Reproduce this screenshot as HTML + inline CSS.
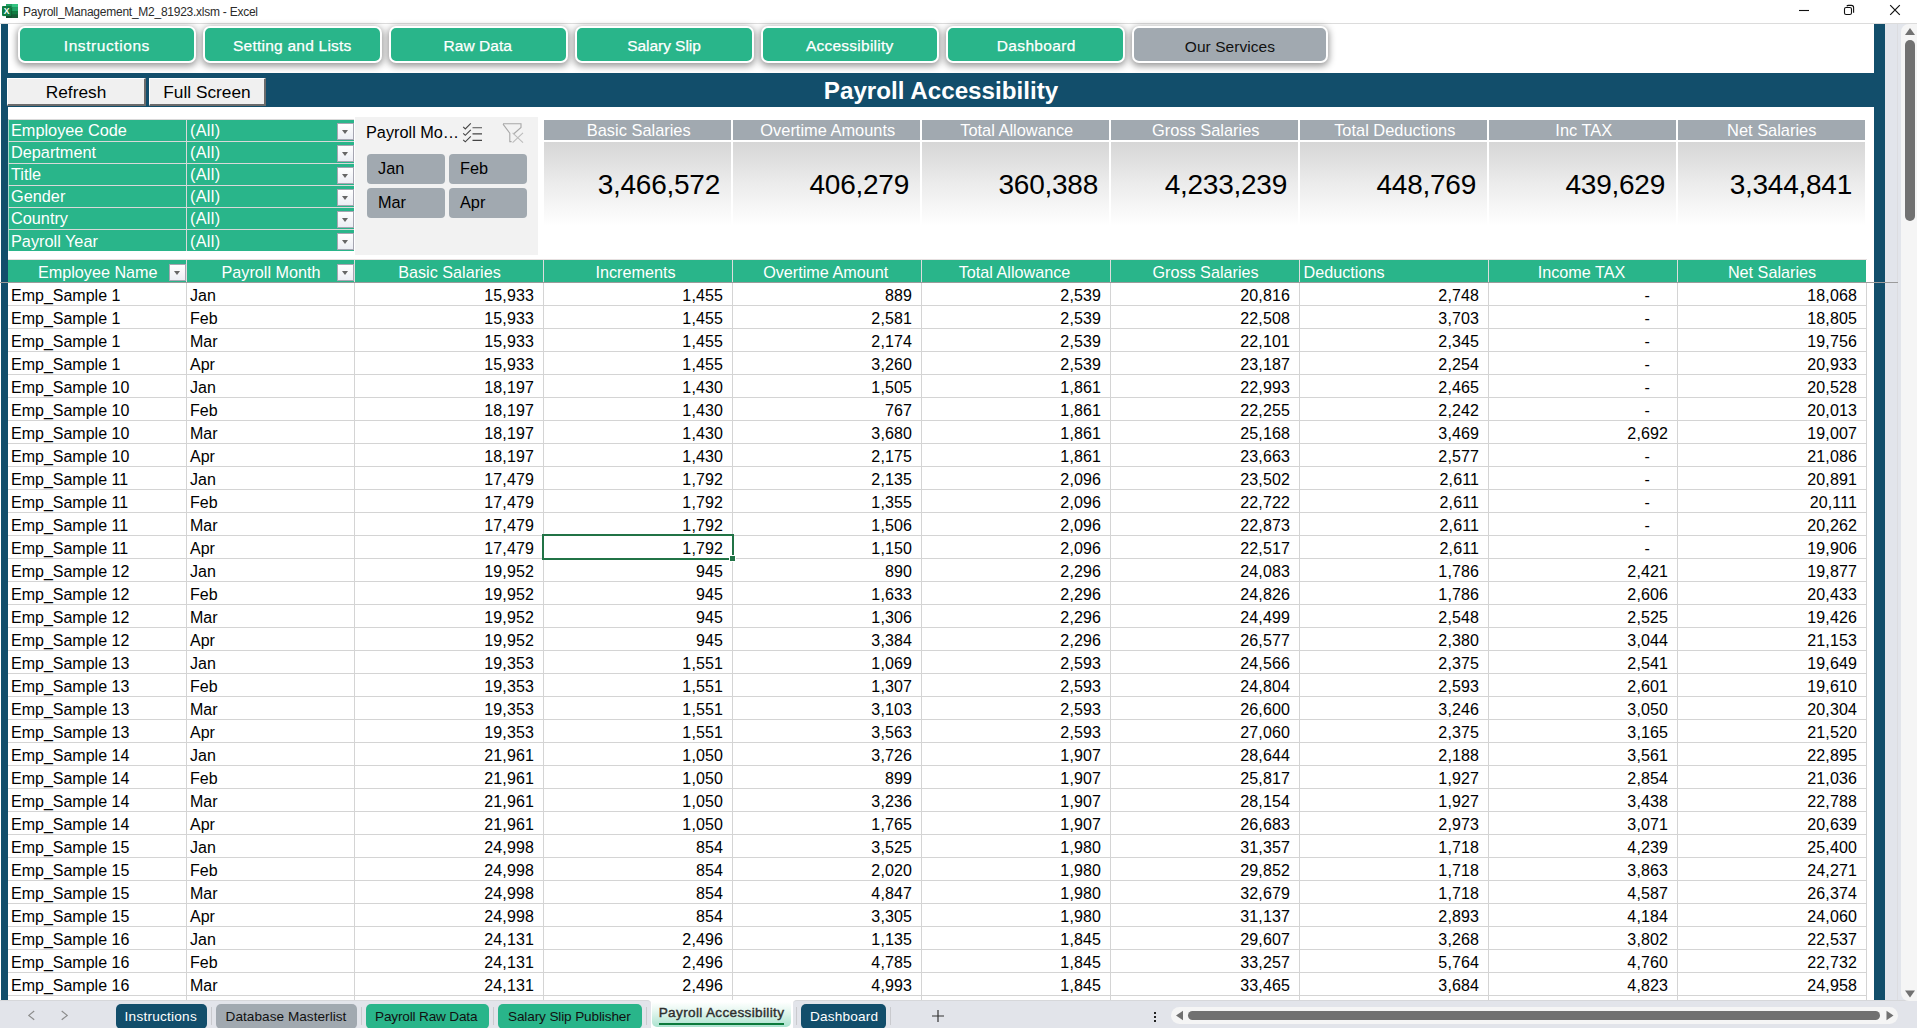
<!DOCTYPE html><html><head><meta charset="utf-8"><title>Payroll_Management_M2_81923.xlsm - Excel</title><style>
*{box-sizing:border-box;margin:0;padding:0}
html,body{width:1917px;height:1028px;overflow:hidden;background:#fff}
body{position:relative;font-family:"Liberation Sans",sans-serif;color:#000}
.abs{position:absolute}
#titlebar{left:0;top:0;width:1917px;height:23px;background:#fff}
#tbline{left:0;top:23px;width:1917px;height:1px;background:#dcdcdc}
#ttext{left:23px;top:4px;font-size:12px;line-height:16px;color:#2b2b2b;white-space:nowrap;letter-spacing:-0.25px}
#lstrip{left:1px;top:24px;width:7px;height:976px;background:#124e6b}
#rstrip{left:1874px;top:24px;width:11px;height:976px;background:#124e6b}
#rlight{left:1885px;top:24px;width:32px;height:976px;background:#e2e5eb;border-left:0}
#rline{left:1897px;top:24px;width:1px;height:976px;background:#dcdde0}
#vscroll{left:1901px;top:24px;width:20px;height:977px;background:#f5f5f5;border-radius:8px 0 0 8px;z-index:5}
#vthumb{left:1905px;top:40px;width:10px;height:181px;background:#717171;border-radius:5px;z-index:6}
#band{left:7px;top:73px;width:1878px;height:34px;background:#124e6b}
#title{left:741px;top:74px;width:400px;height:34px;line-height:34px;text-align:center;color:#fff;font-weight:bold;font-size:24.2px;white-space:nowrap}
.nav{top:26px;height:37px;border:2px solid #fff;border-radius:7px;background:#29b58a;color:#fff;font-size:15.5px;line-height:35px;text-align:left;-webkit-text-stroke:.25px #fff;box-shadow:0 2px 7px 1px rgba(0,0,0,.42);white-space:nowrap}
.nav.g{background:#a1a9b0;color:#111;line-height:37px;-webkit-text-stroke:0}
.fbtn{top:78px;height:28px;background:#f0f0f0;border-top:1px solid #fff;border-left:1px solid #fff;border-right:2px solid #6b6b6b;border-bottom:2px solid #6b6b6b;font-size:17.3px;line-height:27px;text-align:center;white-space:nowrap}
.frow{left:8px;width:346px;height:22px;background:#29b58a;border-top:1px solid #d9d9d9;border-left:1px solid #a5dac8;color:#fff;font-size:16.3px;line-height:21px;white-space:nowrap}
.frow .a{position:absolute;left:2px;top:0}
.frow .b{position:absolute;left:181px;top:0;letter-spacing:.28px}
.frow .sep{position:absolute;left:177px;top:0;width:1px;height:22px;background:#d9d9d9}
.dd{position:absolute;width:17px;height:17px;background:linear-gradient(#fff,#eceef4);border:1px solid #a6a6b2}
.dd:after{content:"";position:absolute;left:4px;top:6px;border:3.5px solid transparent;border-top:4px solid #666;border-bottom:0}
#slicer{left:355px;top:117px;width:183px;height:138px;background:#f2f2f2}
.sb{width:78px;height:30px;background:#a1a9b0;border-radius:4px;font-size:16.3px;line-height:29px;padding-left:11px;color:#000}
.kh{top:120px;height:20px;background:#a1a9b0;color:#fff;font-size:16.4px;line-height:21px;padding-left:2.5px;text-align:center;white-space:nowrap}
.kb{top:142px;height:84px;background:linear-gradient(#d6d6d6,#ececec 50%,#fff 100%);font-size:28px;letter-spacing:-.25px;line-height:86px;text-align:right;padding-right:11px;white-space:nowrap}
.th{top:260px;height:22px;background:#29b58a;color:#fff;font-size:16.2px;line-height:24px;text-align:center;white-space:nowrap}
.row{left:8px;width:1859px;height:23px;border-bottom:1px solid #d4d4d4;font-size:16px;line-height:25px;white-space:nowrap}
.c{position:absolute;top:0;height:23px;border-right:1px solid #d4d4d4;text-align:right;padding-right:9px;letter-spacing:.12px}
.c.l{text-align:left;padding-left:3px;padding-right:0;letter-spacing:0}
#freeze{left:0;top:282px;width:1898px;height:1px;background:#9b9b9b}
#sel{left:542px;top:534px;width:192px;height:26px;border:2px solid #217346}
#selh{left:729px;top:555px;width:5px;height:5px;background:#217346;border:1px solid #fff;box-sizing:content-box}
#tabbar{left:0;top:1000px;width:1917px;height:28px;background:#fff}
.tbseg{top:1000px;height:28px;background:#e2e4ea;border-top:1px solid #d6d7da}
.tab{top:1004px;height:25px;border-radius:5px;font-size:13.6px;line-height:26px;text-align:center;white-space:nowrap}
</style></head><body>
<div class="abs" id="titlebar"></div><div class="abs" id="tbline"></div>
<svg class="abs" style="left:0;top:0" width="20" height="20" viewBox="0 0 20 20"><rect x="6" y="4" width="12" height="14" rx="0.8" fill="#185c37"/><rect x="6" y="4" width="6" height="4" fill="#21a366"/><rect x="12" y="4" width="6" height="3.6" fill="#33c481"/><rect x="12" y="7.6" width="6" height="3.5" fill="#21a366"/><rect x="6" y="8" width="6" height="3.3" fill="#107c41"/><rect x="12" y="11.1" width="6" height="3.5" fill="#107c41"/><rect x="6" y="11.3" width="6" height="6.7" fill="#155231"/><rect x="12" y="14.600" width="6" height="3.400" fill="#185c37"/><rect x="2.6" y="6.400" width="9.800" height="9.800" rx="0.8" fill="#0b5a2e" opacity=".35"/><rect x="2" y="6" width="9.300" height="9.900" rx="0.8" fill="#107c41"/><text x="6.650" y="14.200" font-size="8.600" font-weight="bold" fill="#fff" text-anchor="middle" font-family="Liberation Sans, sans-serif">X</text></svg>
<div class="abs" id="ttext">Payroll_Management_M2_81923.xlsm - Excel</div>
<svg class="abs" style="left:1780px;top:0" width="137" height="23" viewBox="1780 0 137 23"><g stroke="#111" stroke-width="1.1" fill="none"><path d="M1799 10.500H1809"/><rect x="1844.500" y="7.500" width="7" height="7" rx="1.600"/><path d="M1846.800 6.300Q1847.200 5.400 1848.500 5.400H1851.400Q1853.600 5.400 1853.600 7.600V12.800"/><path d="M1890.200 5.200L1899.800 14.800M1899.800 5.200L1890.200 14.800" stroke-width="1.200"/></g></svg>
<div class="abs" id="lstrip"></div><div class="abs" id="rstrip"></div><div class="abs" id="rlight"></div><div class="abs" id="rline"></div><div class="abs" id="vscroll"></div><div class="abs" id="vthumb"></div>
<svg class="abs" style="left:1904px;top:27px;z-index:6" width="12" height="9"><path d="M1 8L6 1L11 8z" fill="#717171"/></svg>
<svg class="abs" style="left:1904px;top:990px;z-index:6" width="12" height="9"><path d="M1 0.5L6 7.5L11 0.5z" fill="#717171"/></svg>
<div class="abs nav" style="left:18px;width:178px"><span style="position:absolute;left:43.80px;letter-spacing:0.570px">Instructions</span></div>
<div class="abs nav" style="left:203px;width:179px"><span style="position:absolute;left:28.00px;letter-spacing:0.234px">Setting and Lists</span></div>
<div class="abs nav" style="left:389px;width:179px"><span style="position:absolute;left:52.50px;letter-spacing:0.042px">Raw Data</span></div>
<div class="abs nav" style="left:575px;width:179px"><span style="position:absolute;left:50.20px;letter-spacing:-0.048px">Salary Slip</span></div>
<div class="abs nav" style="left:761px;width:178px"><span style="position:absolute;left:42.90px;letter-spacing:0.247px">Accessibility</span></div>
<div class="abs nav" style="left:946px;width:179px"><span style="position:absolute;left:48.80px;letter-spacing:0.340px">Dashboard</span></div>
<div class="abs nav g" style="left:1132px;width:196px"><span style="position:absolute;left:50.80px;letter-spacing:0.060px">Our Services</span></div>
<div class="abs" id="band"></div><div class="abs" id="title">Payroll Accessibility</div>
<div class="abs fbtn" style="left:7px;width:139px">Refresh</div><div class="abs fbtn" style="left:149px;width:117px">Full Screen</div>
<div class="abs frow" style="top:119px"><span class="a">Employee Code</span><span class="sep"></span><span class="b">(All)</span><span class="dd" style="left:328px;top:3px"></span></div>
<div class="abs frow" style="top:141px"><span class="a">Department</span><span class="sep"></span><span class="b">(All)</span><span class="dd" style="left:328px;top:3px"></span></div>
<div class="abs frow" style="top:163px"><span class="a">Title</span><span class="sep"></span><span class="b">(All)</span><span class="dd" style="left:328px;top:3px"></span></div>
<div class="abs frow" style="top:185px"><span class="a">Gender</span><span class="sep"></span><span class="b">(All)</span><span class="dd" style="left:328px;top:3px"></span></div>
<div class="abs frow" style="top:207px"><span class="a">Country</span><span class="sep"></span><span class="b">(All)</span><span class="dd" style="left:328px;top:3px"></span></div>
<div class="abs frow" style="top:229px;height:23px;line-height:23px"><span class="a">Payroll Year</span><span class="sep"></span><span class="b">(All)</span><span class="dd" style="left:328px;top:3px"></span></div>
<div class="abs" style="left:8px;top:251px;width:346px;height:1px;background:#fff"></div>
<div class="abs" style="left:8px;top:259px;width:1859px;height:1px;background:#e6e0e0"></div>
<div class="abs" id="slicer"><div class="abs" style="left:11px;top:5px;font-size:16.3px;line-height:20px;white-space:nowrap">Payroll Mo<span style="letter-spacing:.7px;margin-left:.5px">...</span></div>
<svg class="abs" style="left:105px;top:3px" width="26" height="26" viewBox="460 120 26 26" fill="none" stroke="#444" stroke-width="1.15"><path d="M463.2 126.9L465.3 128.9L470.8 123.4M463.2 133.3L465.3 135.3L470.8 129.8M463.2 139.8L465.3 141.8L470.8 136.3"/><path d="M472.5 127.7H482" stroke="#666"/><path d="M472.5 133.9H482M472.5 140.3H482" stroke-width="1.3"/></svg>
<svg class="abs" style="left:145px;top:3px" width="26" height="26" viewBox="500 120 26 26" fill="none" stroke="#a8a8a8" stroke-width="1.1"><path d="M503 123.8H521V127.4L513.6 134M503 124.2L509.8 133.2V141.6H511.6"/><path d="M512.6 132.8L523 142.7M523 132.8L512.6 142.7" stroke="#bcbcbc"/></svg>
<div class="abs sb" style="left:12px;top:37px">Jan</div>
<div class="abs sb" style="left:94px;top:37px">Feb</div>
<div class="abs sb" style="left:12px;top:71px">Mar</div>
<div class="abs sb" style="left:94px;top:71px">Apr</div>
</div>
<div class="abs kh" style="left:544px;width:187px">Basic Salaries</div><div class="abs kb" style="left:544px;width:187px">3,466,572</div>
<div class="abs kh" style="left:733px;width:187px">Overtime Amounts</div><div class="abs kb" style="left:733px;width:187px">406,279</div>
<div class="abs kh" style="left:922px;width:187px">Total Allowance</div><div class="abs kb" style="left:922px;width:187px">360,388</div>
<div class="abs kh" style="left:1111px;width:187px">Gross Salaries</div><div class="abs kb" style="left:1111px;width:187px">4,233,239</div>
<div class="abs kh" style="left:1300px;width:187px">Total Deductions</div><div class="abs kb" style="left:1300px;width:187px">448,769</div>
<div class="abs kh" style="left:1489px;width:187px">Inc TAX</div><div class="abs kb" style="left:1489px;width:187px">439,629</div>
<div class="abs kh" style="left:1678px;width:187px;padding-left:.5px">Net Salaries</div><div class="abs kb" style="left:1678px;width:187px;padding-right:13px">3,344,841</div>
<div class="abs" style="left:8px;top:260px;width:1858px;height:22px;background:#dddddd"></div>
<div class="abs th" style="left:8px;width:178px;padding-left:1.5px">Employee Name</div>
<div class="abs th" style="left:187px;width:167px;padding-left:1px">Payroll Month</div>
<div class="abs th" style="left:355px;width:188px;padding-left:1px">Basic Salaries</div>
<div class="abs th" style="left:544px;width:188px;padding-right:5px">Increments</div>
<div class="abs th" style="left:733px;width:188px;padding-right:2.6px">Overtime Amount</div>
<div class="abs th" style="left:922px;width:188px;padding-right:3px">Total Allowance</div>
<div class="abs th" style="left:1111px;width:188px;padding-left:1px">Gross Salaries</div>
<div class="abs th" style="left:1300px;width:188px;text-align:left;padding-left:3.500px">Deductions</div>
<div class="abs th" style="left:1489px;width:188px;padding-right:3px">Income TAX</div>
<div class="abs th" style="left:1678px;width:188px">Net Salaries</div>
<span class="dd abs" style="left:169px;top:264px"></span><span class="dd abs" style="left:337px;top:264px"></span>
<div class="abs row" style="top:283px"><span class="c l" style="left:0px;width:179px">Emp_Sample 1</span><span class="c l" style="left:179px;width:168px">Jan</span><span class="c" style="left:347px;width:189px">15,933</span><span class="c" style="left:536px;width:189px">1,455</span><span class="c" style="left:725px;width:189px">889</span><span class="c" style="left:914px;width:189px">2,539</span><span class="c" style="left:1103px;width:189px">20,816</span><span class="c" style="left:1292px;width:189px">2,748</span><span class="c" style="left:1481px;width:189px;padding-right:27px">-</span><span class="c" style="left:1670px;width:189px">18,068</span></div>
<div class="abs row" style="top:306px"><span class="c l" style="left:0px;width:179px">Emp_Sample 1</span><span class="c l" style="left:179px;width:168px">Feb</span><span class="c" style="left:347px;width:189px">15,933</span><span class="c" style="left:536px;width:189px">1,455</span><span class="c" style="left:725px;width:189px">2,581</span><span class="c" style="left:914px;width:189px">2,539</span><span class="c" style="left:1103px;width:189px">22,508</span><span class="c" style="left:1292px;width:189px">3,703</span><span class="c" style="left:1481px;width:189px;padding-right:27px">-</span><span class="c" style="left:1670px;width:189px">18,805</span></div>
<div class="abs row" style="top:329px"><span class="c l" style="left:0px;width:179px">Emp_Sample 1</span><span class="c l" style="left:179px;width:168px">Mar</span><span class="c" style="left:347px;width:189px">15,933</span><span class="c" style="left:536px;width:189px">1,455</span><span class="c" style="left:725px;width:189px">2,174</span><span class="c" style="left:914px;width:189px">2,539</span><span class="c" style="left:1103px;width:189px">22,101</span><span class="c" style="left:1292px;width:189px">2,345</span><span class="c" style="left:1481px;width:189px;padding-right:27px">-</span><span class="c" style="left:1670px;width:189px">19,756</span></div>
<div class="abs row" style="top:352px"><span class="c l" style="left:0px;width:179px">Emp_Sample 1</span><span class="c l" style="left:179px;width:168px">Apr</span><span class="c" style="left:347px;width:189px">15,933</span><span class="c" style="left:536px;width:189px">1,455</span><span class="c" style="left:725px;width:189px">3,260</span><span class="c" style="left:914px;width:189px">2,539</span><span class="c" style="left:1103px;width:189px">23,187</span><span class="c" style="left:1292px;width:189px">2,254</span><span class="c" style="left:1481px;width:189px;padding-right:27px">-</span><span class="c" style="left:1670px;width:189px">20,933</span></div>
<div class="abs row" style="top:375px"><span class="c l" style="left:0px;width:179px">Emp_Sample 10</span><span class="c l" style="left:179px;width:168px">Jan</span><span class="c" style="left:347px;width:189px">18,197</span><span class="c" style="left:536px;width:189px">1,430</span><span class="c" style="left:725px;width:189px">1,505</span><span class="c" style="left:914px;width:189px">1,861</span><span class="c" style="left:1103px;width:189px">22,993</span><span class="c" style="left:1292px;width:189px">2,465</span><span class="c" style="left:1481px;width:189px;padding-right:27px">-</span><span class="c" style="left:1670px;width:189px">20,528</span></div>
<div class="abs row" style="top:398px"><span class="c l" style="left:0px;width:179px">Emp_Sample 10</span><span class="c l" style="left:179px;width:168px">Feb</span><span class="c" style="left:347px;width:189px">18,197</span><span class="c" style="left:536px;width:189px">1,430</span><span class="c" style="left:725px;width:189px">767</span><span class="c" style="left:914px;width:189px">1,861</span><span class="c" style="left:1103px;width:189px">22,255</span><span class="c" style="left:1292px;width:189px">2,242</span><span class="c" style="left:1481px;width:189px;padding-right:27px">-</span><span class="c" style="left:1670px;width:189px">20,013</span></div>
<div class="abs row" style="top:421px"><span class="c l" style="left:0px;width:179px">Emp_Sample 10</span><span class="c l" style="left:179px;width:168px">Mar</span><span class="c" style="left:347px;width:189px">18,197</span><span class="c" style="left:536px;width:189px">1,430</span><span class="c" style="left:725px;width:189px">3,680</span><span class="c" style="left:914px;width:189px">1,861</span><span class="c" style="left:1103px;width:189px">25,168</span><span class="c" style="left:1292px;width:189px">3,469</span><span class="c" style="left:1481px;width:189px">2,692</span><span class="c" style="left:1670px;width:189px">19,007</span></div>
<div class="abs row" style="top:444px"><span class="c l" style="left:0px;width:179px">Emp_Sample 10</span><span class="c l" style="left:179px;width:168px">Apr</span><span class="c" style="left:347px;width:189px">18,197</span><span class="c" style="left:536px;width:189px">1,430</span><span class="c" style="left:725px;width:189px">2,175</span><span class="c" style="left:914px;width:189px">1,861</span><span class="c" style="left:1103px;width:189px">23,663</span><span class="c" style="left:1292px;width:189px">2,577</span><span class="c" style="left:1481px;width:189px;padding-right:27px">-</span><span class="c" style="left:1670px;width:189px">21,086</span></div>
<div class="abs row" style="top:467px"><span class="c l" style="left:0px;width:179px">Emp_Sample 11</span><span class="c l" style="left:179px;width:168px">Jan</span><span class="c" style="left:347px;width:189px">17,479</span><span class="c" style="left:536px;width:189px">1,792</span><span class="c" style="left:725px;width:189px">2,135</span><span class="c" style="left:914px;width:189px">2,096</span><span class="c" style="left:1103px;width:189px">23,502</span><span class="c" style="left:1292px;width:189px">2,611</span><span class="c" style="left:1481px;width:189px;padding-right:27px">-</span><span class="c" style="left:1670px;width:189px">20,891</span></div>
<div class="abs row" style="top:490px"><span class="c l" style="left:0px;width:179px">Emp_Sample 11</span><span class="c l" style="left:179px;width:168px">Feb</span><span class="c" style="left:347px;width:189px">17,479</span><span class="c" style="left:536px;width:189px">1,792</span><span class="c" style="left:725px;width:189px">1,355</span><span class="c" style="left:914px;width:189px">2,096</span><span class="c" style="left:1103px;width:189px">22,722</span><span class="c" style="left:1292px;width:189px">2,611</span><span class="c" style="left:1481px;width:189px;padding-right:27px">-</span><span class="c" style="left:1670px;width:189px">20,111</span></div>
<div class="abs row" style="top:513px"><span class="c l" style="left:0px;width:179px">Emp_Sample 11</span><span class="c l" style="left:179px;width:168px">Mar</span><span class="c" style="left:347px;width:189px">17,479</span><span class="c" style="left:536px;width:189px">1,792</span><span class="c" style="left:725px;width:189px">1,506</span><span class="c" style="left:914px;width:189px">2,096</span><span class="c" style="left:1103px;width:189px">22,873</span><span class="c" style="left:1292px;width:189px">2,611</span><span class="c" style="left:1481px;width:189px;padding-right:27px">-</span><span class="c" style="left:1670px;width:189px">20,262</span></div>
<div class="abs row" style="top:536px"><span class="c l" style="left:0px;width:179px">Emp_Sample 11</span><span class="c l" style="left:179px;width:168px">Apr</span><span class="c" style="left:347px;width:189px">17,479</span><span class="c" style="left:536px;width:189px">1,792</span><span class="c" style="left:725px;width:189px">1,150</span><span class="c" style="left:914px;width:189px">2,096</span><span class="c" style="left:1103px;width:189px">22,517</span><span class="c" style="left:1292px;width:189px">2,611</span><span class="c" style="left:1481px;width:189px;padding-right:27px">-</span><span class="c" style="left:1670px;width:189px">19,906</span></div>
<div class="abs row" style="top:559px"><span class="c l" style="left:0px;width:179px">Emp_Sample 12</span><span class="c l" style="left:179px;width:168px">Jan</span><span class="c" style="left:347px;width:189px">19,952</span><span class="c" style="left:536px;width:189px">945</span><span class="c" style="left:725px;width:189px">890</span><span class="c" style="left:914px;width:189px">2,296</span><span class="c" style="left:1103px;width:189px">24,083</span><span class="c" style="left:1292px;width:189px">1,786</span><span class="c" style="left:1481px;width:189px">2,421</span><span class="c" style="left:1670px;width:189px">19,877</span></div>
<div class="abs row" style="top:582px"><span class="c l" style="left:0px;width:179px">Emp_Sample 12</span><span class="c l" style="left:179px;width:168px">Feb</span><span class="c" style="left:347px;width:189px">19,952</span><span class="c" style="left:536px;width:189px">945</span><span class="c" style="left:725px;width:189px">1,633</span><span class="c" style="left:914px;width:189px">2,296</span><span class="c" style="left:1103px;width:189px">24,826</span><span class="c" style="left:1292px;width:189px">1,786</span><span class="c" style="left:1481px;width:189px">2,606</span><span class="c" style="left:1670px;width:189px">20,433</span></div>
<div class="abs row" style="top:605px"><span class="c l" style="left:0px;width:179px">Emp_Sample 12</span><span class="c l" style="left:179px;width:168px">Mar</span><span class="c" style="left:347px;width:189px">19,952</span><span class="c" style="left:536px;width:189px">945</span><span class="c" style="left:725px;width:189px">1,306</span><span class="c" style="left:914px;width:189px">2,296</span><span class="c" style="left:1103px;width:189px">24,499</span><span class="c" style="left:1292px;width:189px">2,548</span><span class="c" style="left:1481px;width:189px">2,525</span><span class="c" style="left:1670px;width:189px">19,426</span></div>
<div class="abs row" style="top:628px"><span class="c l" style="left:0px;width:179px">Emp_Sample 12</span><span class="c l" style="left:179px;width:168px">Apr</span><span class="c" style="left:347px;width:189px">19,952</span><span class="c" style="left:536px;width:189px">945</span><span class="c" style="left:725px;width:189px">3,384</span><span class="c" style="left:914px;width:189px">2,296</span><span class="c" style="left:1103px;width:189px">26,577</span><span class="c" style="left:1292px;width:189px">2,380</span><span class="c" style="left:1481px;width:189px">3,044</span><span class="c" style="left:1670px;width:189px">21,153</span></div>
<div class="abs row" style="top:651px"><span class="c l" style="left:0px;width:179px">Emp_Sample 13</span><span class="c l" style="left:179px;width:168px">Jan</span><span class="c" style="left:347px;width:189px">19,353</span><span class="c" style="left:536px;width:189px">1,551</span><span class="c" style="left:725px;width:189px">1,069</span><span class="c" style="left:914px;width:189px">2,593</span><span class="c" style="left:1103px;width:189px">24,566</span><span class="c" style="left:1292px;width:189px">2,375</span><span class="c" style="left:1481px;width:189px">2,541</span><span class="c" style="left:1670px;width:189px">19,649</span></div>
<div class="abs row" style="top:674px"><span class="c l" style="left:0px;width:179px">Emp_Sample 13</span><span class="c l" style="left:179px;width:168px">Feb</span><span class="c" style="left:347px;width:189px">19,353</span><span class="c" style="left:536px;width:189px">1,551</span><span class="c" style="left:725px;width:189px">1,307</span><span class="c" style="left:914px;width:189px">2,593</span><span class="c" style="left:1103px;width:189px">24,804</span><span class="c" style="left:1292px;width:189px">2,593</span><span class="c" style="left:1481px;width:189px">2,601</span><span class="c" style="left:1670px;width:189px">19,610</span></div>
<div class="abs row" style="top:697px"><span class="c l" style="left:0px;width:179px">Emp_Sample 13</span><span class="c l" style="left:179px;width:168px">Mar</span><span class="c" style="left:347px;width:189px">19,353</span><span class="c" style="left:536px;width:189px">1,551</span><span class="c" style="left:725px;width:189px">3,103</span><span class="c" style="left:914px;width:189px">2,593</span><span class="c" style="left:1103px;width:189px">26,600</span><span class="c" style="left:1292px;width:189px">3,246</span><span class="c" style="left:1481px;width:189px">3,050</span><span class="c" style="left:1670px;width:189px">20,304</span></div>
<div class="abs row" style="top:720px"><span class="c l" style="left:0px;width:179px">Emp_Sample 13</span><span class="c l" style="left:179px;width:168px">Apr</span><span class="c" style="left:347px;width:189px">19,353</span><span class="c" style="left:536px;width:189px">1,551</span><span class="c" style="left:725px;width:189px">3,563</span><span class="c" style="left:914px;width:189px">2,593</span><span class="c" style="left:1103px;width:189px">27,060</span><span class="c" style="left:1292px;width:189px">2,375</span><span class="c" style="left:1481px;width:189px">3,165</span><span class="c" style="left:1670px;width:189px">21,520</span></div>
<div class="abs row" style="top:743px"><span class="c l" style="left:0px;width:179px">Emp_Sample 14</span><span class="c l" style="left:179px;width:168px">Jan</span><span class="c" style="left:347px;width:189px">21,961</span><span class="c" style="left:536px;width:189px">1,050</span><span class="c" style="left:725px;width:189px">3,726</span><span class="c" style="left:914px;width:189px">1,907</span><span class="c" style="left:1103px;width:189px">28,644</span><span class="c" style="left:1292px;width:189px">2,188</span><span class="c" style="left:1481px;width:189px">3,561</span><span class="c" style="left:1670px;width:189px">22,895</span></div>
<div class="abs row" style="top:766px"><span class="c l" style="left:0px;width:179px">Emp_Sample 14</span><span class="c l" style="left:179px;width:168px">Feb</span><span class="c" style="left:347px;width:189px">21,961</span><span class="c" style="left:536px;width:189px">1,050</span><span class="c" style="left:725px;width:189px">899</span><span class="c" style="left:914px;width:189px">1,907</span><span class="c" style="left:1103px;width:189px">25,817</span><span class="c" style="left:1292px;width:189px">1,927</span><span class="c" style="left:1481px;width:189px">2,854</span><span class="c" style="left:1670px;width:189px">21,036</span></div>
<div class="abs row" style="top:789px"><span class="c l" style="left:0px;width:179px">Emp_Sample 14</span><span class="c l" style="left:179px;width:168px">Mar</span><span class="c" style="left:347px;width:189px">21,961</span><span class="c" style="left:536px;width:189px">1,050</span><span class="c" style="left:725px;width:189px">3,236</span><span class="c" style="left:914px;width:189px">1,907</span><span class="c" style="left:1103px;width:189px">28,154</span><span class="c" style="left:1292px;width:189px">1,927</span><span class="c" style="left:1481px;width:189px">3,438</span><span class="c" style="left:1670px;width:189px">22,788</span></div>
<div class="abs row" style="top:812px"><span class="c l" style="left:0px;width:179px">Emp_Sample 14</span><span class="c l" style="left:179px;width:168px">Apr</span><span class="c" style="left:347px;width:189px">21,961</span><span class="c" style="left:536px;width:189px">1,050</span><span class="c" style="left:725px;width:189px">1,765</span><span class="c" style="left:914px;width:189px">1,907</span><span class="c" style="left:1103px;width:189px">26,683</span><span class="c" style="left:1292px;width:189px">2,973</span><span class="c" style="left:1481px;width:189px">3,071</span><span class="c" style="left:1670px;width:189px">20,639</span></div>
<div class="abs row" style="top:835px"><span class="c l" style="left:0px;width:179px">Emp_Sample 15</span><span class="c l" style="left:179px;width:168px">Jan</span><span class="c" style="left:347px;width:189px">24,998</span><span class="c" style="left:536px;width:189px">854</span><span class="c" style="left:725px;width:189px">3,525</span><span class="c" style="left:914px;width:189px">1,980</span><span class="c" style="left:1103px;width:189px">31,357</span><span class="c" style="left:1292px;width:189px">1,718</span><span class="c" style="left:1481px;width:189px">4,239</span><span class="c" style="left:1670px;width:189px">25,400</span></div>
<div class="abs row" style="top:858px"><span class="c l" style="left:0px;width:179px">Emp_Sample 15</span><span class="c l" style="left:179px;width:168px">Feb</span><span class="c" style="left:347px;width:189px">24,998</span><span class="c" style="left:536px;width:189px">854</span><span class="c" style="left:725px;width:189px">2,020</span><span class="c" style="left:914px;width:189px">1,980</span><span class="c" style="left:1103px;width:189px">29,852</span><span class="c" style="left:1292px;width:189px">1,718</span><span class="c" style="left:1481px;width:189px">3,863</span><span class="c" style="left:1670px;width:189px">24,271</span></div>
<div class="abs row" style="top:881px"><span class="c l" style="left:0px;width:179px">Emp_Sample 15</span><span class="c l" style="left:179px;width:168px">Mar</span><span class="c" style="left:347px;width:189px">24,998</span><span class="c" style="left:536px;width:189px">854</span><span class="c" style="left:725px;width:189px">4,847</span><span class="c" style="left:914px;width:189px">1,980</span><span class="c" style="left:1103px;width:189px">32,679</span><span class="c" style="left:1292px;width:189px">1,718</span><span class="c" style="left:1481px;width:189px">4,587</span><span class="c" style="left:1670px;width:189px">26,374</span></div>
<div class="abs row" style="top:904px"><span class="c l" style="left:0px;width:179px">Emp_Sample 15</span><span class="c l" style="left:179px;width:168px">Apr</span><span class="c" style="left:347px;width:189px">24,998</span><span class="c" style="left:536px;width:189px">854</span><span class="c" style="left:725px;width:189px">3,305</span><span class="c" style="left:914px;width:189px">1,980</span><span class="c" style="left:1103px;width:189px">31,137</span><span class="c" style="left:1292px;width:189px">2,893</span><span class="c" style="left:1481px;width:189px">4,184</span><span class="c" style="left:1670px;width:189px">24,060</span></div>
<div class="abs row" style="top:927px"><span class="c l" style="left:0px;width:179px">Emp_Sample 16</span><span class="c l" style="left:179px;width:168px">Jan</span><span class="c" style="left:347px;width:189px">24,131</span><span class="c" style="left:536px;width:189px">2,496</span><span class="c" style="left:725px;width:189px">1,135</span><span class="c" style="left:914px;width:189px">1,845</span><span class="c" style="left:1103px;width:189px">29,607</span><span class="c" style="left:1292px;width:189px">3,268</span><span class="c" style="left:1481px;width:189px">3,802</span><span class="c" style="left:1670px;width:189px">22,537</span></div>
<div class="abs row" style="top:950px"><span class="c l" style="left:0px;width:179px">Emp_Sample 16</span><span class="c l" style="left:179px;width:168px">Feb</span><span class="c" style="left:347px;width:189px">24,131</span><span class="c" style="left:536px;width:189px">2,496</span><span class="c" style="left:725px;width:189px">4,785</span><span class="c" style="left:914px;width:189px">1,845</span><span class="c" style="left:1103px;width:189px">33,257</span><span class="c" style="left:1292px;width:189px">5,764</span><span class="c" style="left:1481px;width:189px">4,760</span><span class="c" style="left:1670px;width:189px">22,732</span></div>
<div class="abs row" style="top:973px"><span class="c l" style="left:0px;width:179px">Emp_Sample 16</span><span class="c l" style="left:179px;width:168px">Mar</span><span class="c" style="left:347px;width:189px">24,131</span><span class="c" style="left:536px;width:189px">2,496</span><span class="c" style="left:725px;width:189px">4,993</span><span class="c" style="left:914px;width:189px">1,845</span><span class="c" style="left:1103px;width:189px">33,465</span><span class="c" style="left:1292px;width:189px">3,684</span><span class="c" style="left:1481px;width:189px">4,823</span><span class="c" style="left:1670px;width:189px">24,958</span></div>
<div class="abs row" style="top:996px"><span class="c l" style="left:0px;width:179px"></span><span class="c l" style="left:179px;width:168px"></span><span class="c" style="left:347px;width:189px"></span><span class="c" style="left:536px;width:189px"></span><span class="c" style="left:725px;width:189px"></span><span class="c" style="left:914px;width:189px"></span><span class="c" style="left:1103px;width:189px"></span><span class="c" style="left:1292px;width:189px"></span><span class="c" style="left:1481px;width:189px"></span><span class="c" style="left:1670px;width:189px"></span></div>
<div class="abs" id="freeze"></div><div class="abs" id="sel"></div><div class="abs" id="selh"></div>
<div class="abs" id="tabbar"></div><div class="abs tbseg" style="left:0;width:650.5px;border-top-right-radius:4px"></div><div class="abs tbseg" style="left:792.5px;width:1125px;border-top-left-radius:4px"></div>
<div class="abs" style="left:652px;top:1002px;width:139px;height:25px;background:linear-gradient(#fff 0%,#e6f7f0 35%,#abe2cf 100%);border-radius:0 0 5px 5px"></div>
<div class="abs tab" style="left:116px;width:91px;background:#124e6b;color:#fff"><span style="position:absolute;left:8.60px;letter-spacing:0.236px">Instructions</span></div>
<div class="abs tab" style="left:216px;width:141px;background:#a1a9b0;color:#111"><span style="position:absolute;left:9.60px;letter-spacing:0.037px">Database Masterlist</span></div>
<div class="abs tab" style="left:366px;width:123px;background:#29b58a;color:#111"><span style="position:absolute;left:9.00px;letter-spacing:-0.167px">Payroll Raw Data</span></div>
<div class="abs tab" style="left:498px;width:144px;background:#29b58a;color:#111"><span style="position:absolute;left:10.00px;letter-spacing:-0.133px">Salary Slip Publisher</span></div>
<div class="abs tab" style="left:801px;width:85px;background:#124e6b;color:#fff"><span style="position:absolute;left:9.00px;letter-spacing:0.190px">Dashboard</span></div>
<div class="abs" style="left:651px;top:1002px;width:141px;height:22px;line-height:22px;text-align:center;font-size:13.6px;letter-spacing:.33px;-webkit-text-stroke:.4px #2e2e2e;color:#2e2e2e;white-space:nowrap" id="acttab">Payroll Accessibility</div>
<div class="abs" style="left:659px;top:1023px;width:125px;height:2px;background:#0b7a3b"></div>
<div class="abs" style="left:211px;top:1007px;width:1px;height:18px;background:#c9cace"></div>
<div class="abs" style="left:361px;top:1007px;width:1px;height:18px;background:#c9cace"></div>
<div class="abs" style="left:493px;top:1007px;width:1px;height:18px;background:#c9cace"></div>
<div class="abs" style="left:646px;top:1007px;width:1px;height:18px;background:#c9cace"></div>
<div class="abs" style="left:796px;top:1007px;width:1px;height:18px;background:#c9cace"></div>
<div class="abs" style="left:890px;top:1007px;width:1px;height:18px;background:#c9cace"></div>
<svg class="abs" style="left:25px;top:1009px" width="50" height="14" viewBox="25 1009 50 14" fill="none" stroke="#8c8c8c" stroke-width="1.2"><path d="M34.2 1011L28.800 1015.400L34.200 1019.800M61.700 1011L67.200 1015.400L61.700 1019.800"/></svg>
<svg class="abs" style="left:931px;top:1009px" width="14" height="14" fill="none" stroke="#333" stroke-width="1.2"><path d="M7 1v12M1 7h12"/></svg>
<div class="abs" style="left:1154px;top:1012px;width:2px;height:2px;background:#222;box-shadow:0 4px 0 #222,0 8px 0 #222"></div>
<div class="abs" style="left:1171px;top:1007px;width:727px;height:17px;background:#f5f5f5;border-radius:9px"></div>
<div class="abs" style="left:1188px;top:1011px;width:692px;height:9px;background:#717171;border-radius:5px"></div>
<svg class="abs" style="left:1175px;top:1010px" width="9" height="11"><path d="M8 0.7L1 5.500L8 10.300z" fill="#717171"/></svg>
<svg class="abs" style="left:1886px;top:1010px" width="9" height="11"><path d="M0.500 0.700L7.500 5.500L0.500 10.300z" fill="#717171"/></svg>
</body></html>
